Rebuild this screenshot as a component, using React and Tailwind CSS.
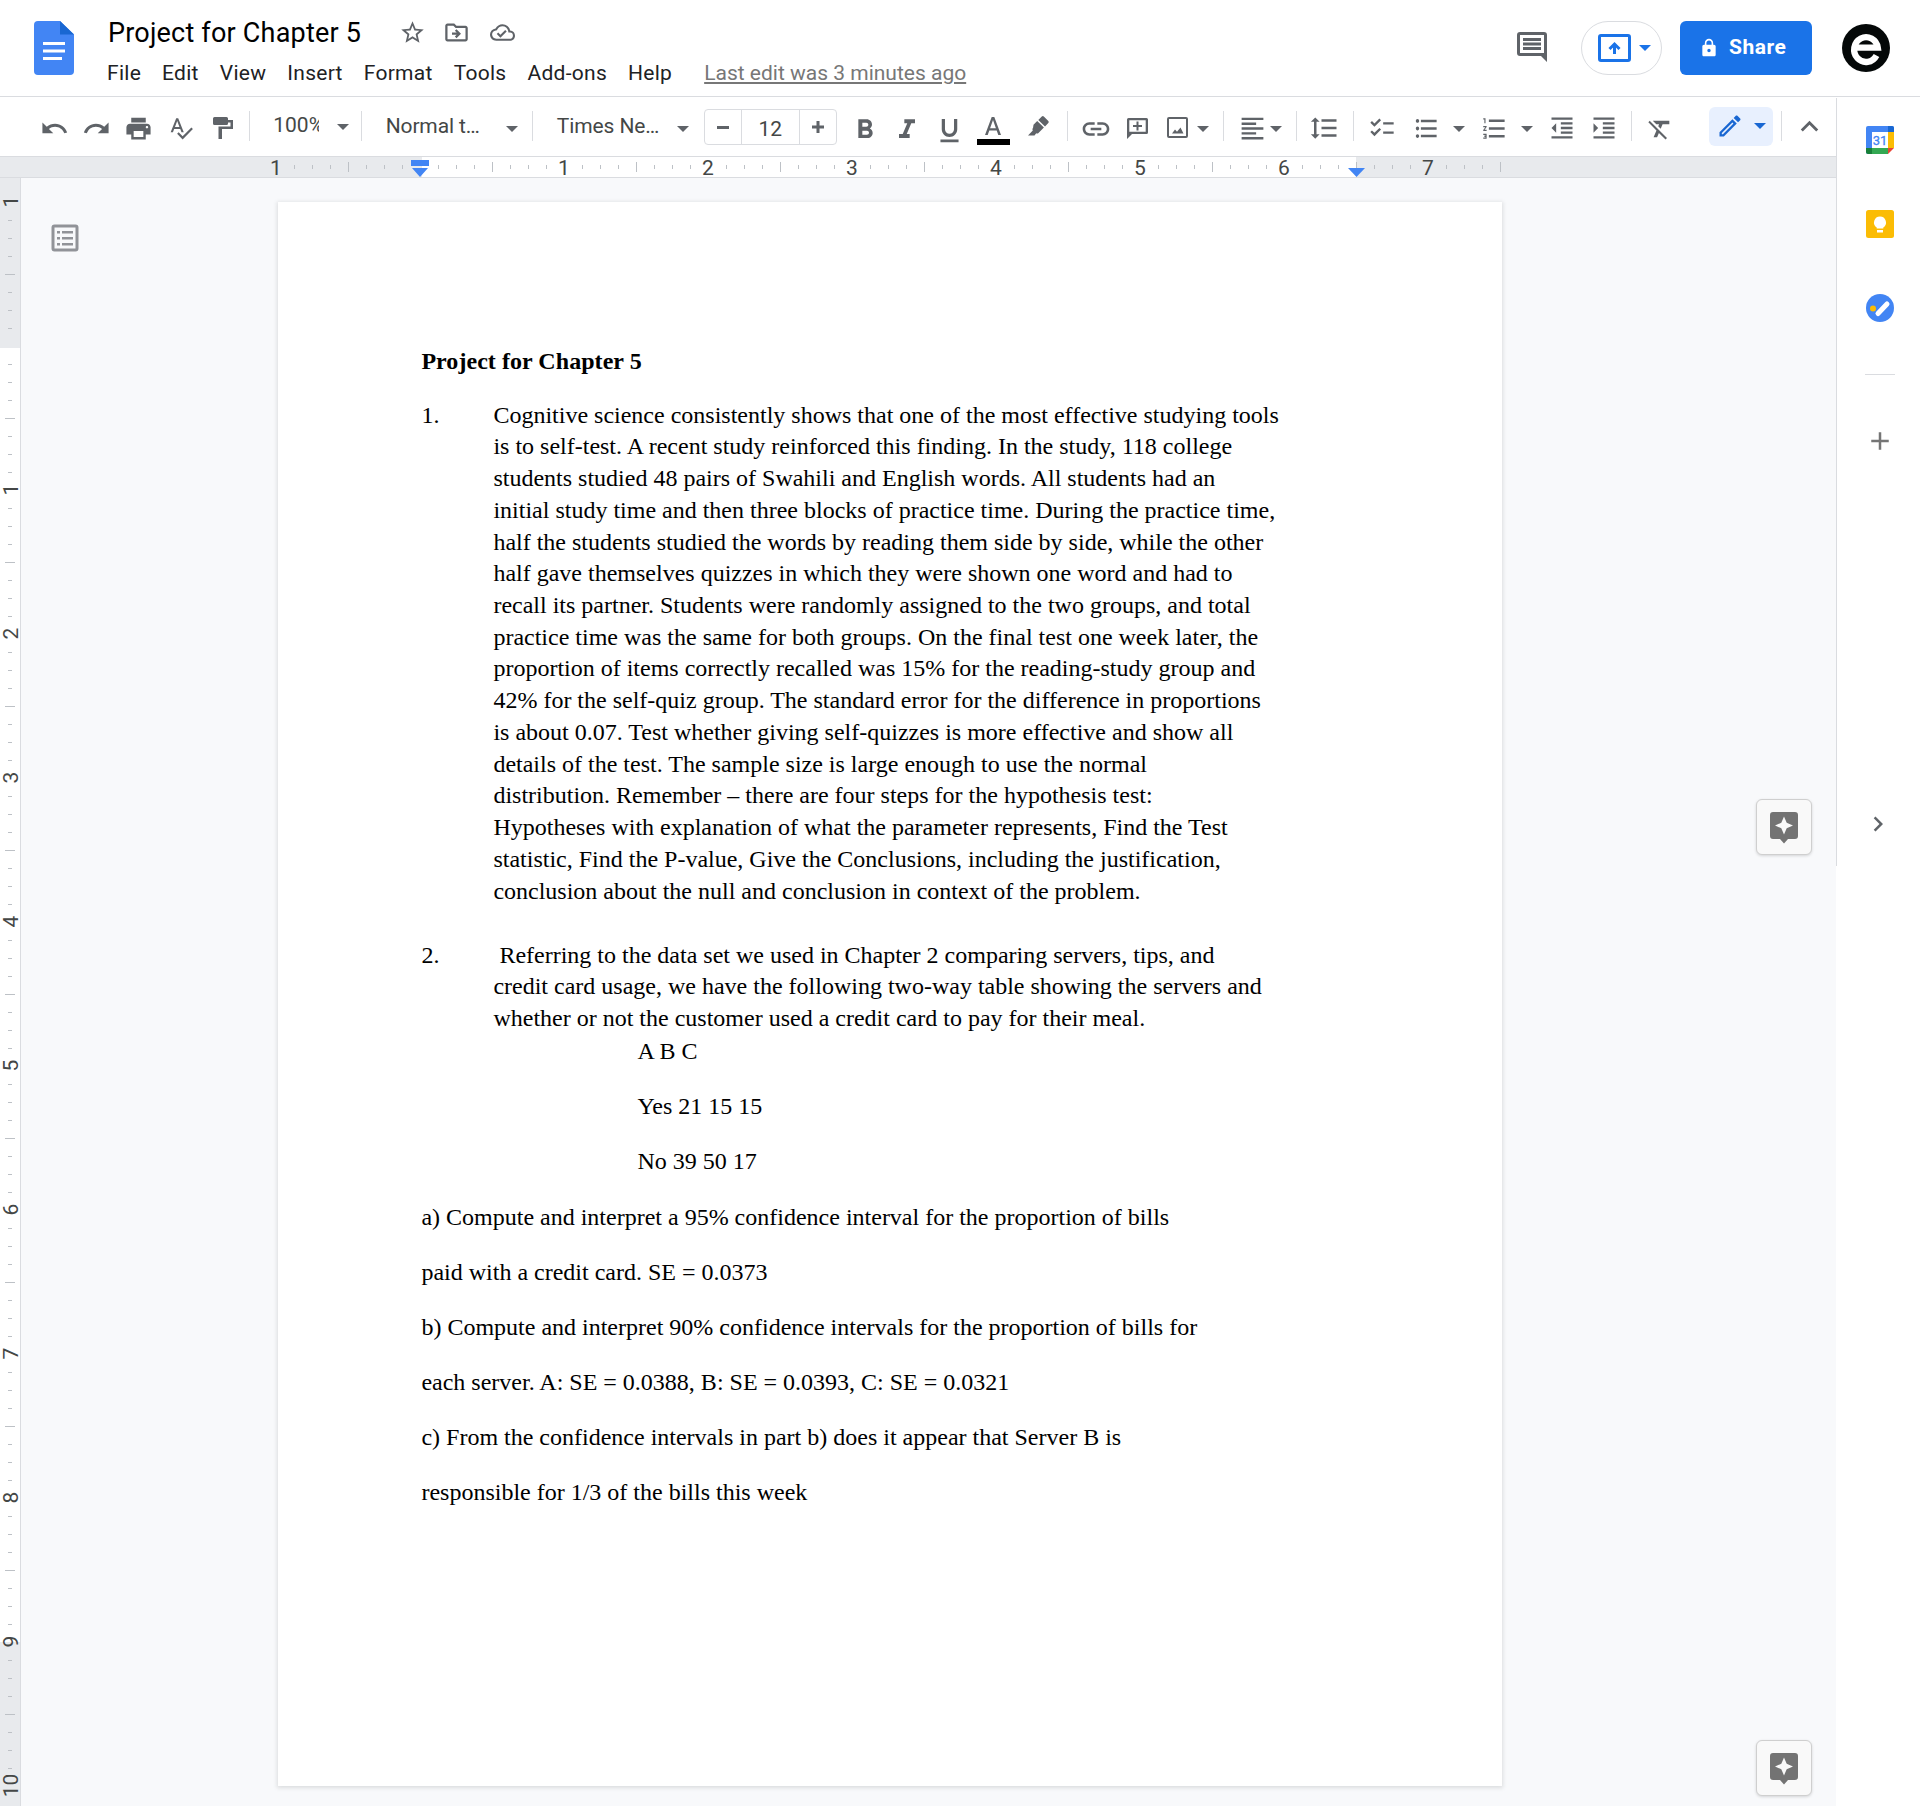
import {
  MdAdd,
  MdChecklist,
  MdChevronRight,
  MdExpandLess,
  MdFormatAlignLeft,
  MdFormatBold,
  MdFormatClear,
  MdFormatIndentDecrease,
  MdFormatIndentIncrease,
  MdFormatItalic,
  MdFormatLineSpacing,
  MdFormatListBulleted,
  MdFormatListNumbered,
  MdFormatUnderlined,
  MdLink,
  MdLock,
  MdOutlineCloudDone,
  MdOutlineDriveFileMove,
  MdOutlineEdit,
  MdPrint,
  MdRedo,
  MdSpellcheck,
  MdStarBorder,
  MdUndo,
} from 'react-icons/md';

const menus = [
  'File',
  'Edit',
  'View',
  'Insert',
  'Format',
  'Tools',
  'Add-ons',
  'Help',
];

const question1 = [
  'Cognitive science consistently shows that one of the most effective studying tools',
  'is to self-test. A recent study reinforced this finding. In the study, 118 college',
  'students studied 48 pairs of Swahili and English words. All students had an',
  'initial study time and then three blocks of practice time. During the practice time,',
  'half the students studied the words by reading them side by side, while the other',
  'half gave themselves quizzes in which they were shown one word and had to',
  'recall its partner. Students were randomly assigned to the two groups, and total',
  'practice time was the same for both groups. On the final test one week later, the',
  'proportion of items correctly recalled was 15% for the reading-study group and',
  '42% for the self-quiz group. The standard error for the difference in proportions',
  'is about 0.07. Test whether giving self-quizzes is more effective and show all',
  'details of the test. The sample size is large enough to use the normal',
  'distribution. Remember – there are four steps for the hypothesis test:',
  'Hypotheses with explanation of what the parameter represents, Find the Test',
  'statistic, Find the P-value, Give the Conclusions, including the justification,',
  'conclusion about the null and conclusion in context of the problem.',
];

const question2 = [
  ' Referring to the data set we used in Chapter 2 comparing servers, tips, and',
  'credit card usage, we have the following two-way table showing the servers and',
  'whether or not the customer used a credit card to pay for their meal.',
];

const table = ['A B C', 'Yes 21 15 15', 'No 39 50 17'];

const parts = [
  'a) Compute and interpret a 95% confidence interval for the proportion of bills',
  'paid with a credit card. SE = 0.0373',
  'b) Compute and interpret 90% confidence intervals for the proportion of bills for',
  'each server. A: SE = 0.0388, B: SE = 0.0393, C: SE = 0.0321',
  'c) From the confidence intervals in part b) does it appear that Server B is',
  'responsible for 1/3 of the bills this week',
];

function Arrow({ className = '' }) {
  return (
    <svg
      className={`w-3 h-1.5 shrink-0 fill-current ${className}`}
      viewBox="0 0 12 6"
    >
      <path d="M0 0h12L6 6z" />
    </svg>
  );
}

function Separator({ className = '' }) {
  return (
    <div className={`w-px h-[30px] mb-px shrink-0 bg-[#dadce0] ${className}`} />
  );
}

function Tool({ children, className = 'w-[42px]' }) {
  return (
    <div className={`flex items-center justify-center shrink-0 ${className}`}>
      {children}
    </div>
  );
}

function DocsLogo() {
  return (
    <svg className="w-10 h-[54px] shrink-0" viewBox="0 0 40 54">
      <path
        d="M4 0h22l14 13.5V50a4 4 0 0 1-4 4H4a4 4 0 0 1-4-4V4a4 4 0 0 1 4-4z"
        fill="#4285f4"
      />
      <path d="M26 0l14 13.5H26z" fill="#1967d2" />
      <path d="M9 21h22v3H9zM9 28.500h22v3H9zM9 36h19v3H9z" fill="#fff" />
    </svg>
  );
}

function Header() {
  return (
    <header className="flex h-[97px] shrink-0 border-b border-[#dadce0] pl-[34px] pr-[30px]">
      <div className="pt-[21px]">
        <DocsLogo />
      </div>
      <div className="ml-[33px] flex-1">
        <div className="flex items-center h-[34px] mt-[16px]">
          <h1 className="w-[254px] pl-px whitespace-nowrap text-[27px] leading-[34px] text-black tracking-[0.2px]">
            Project for Chapter 5
          </h1>
          <div className="flex items-center gap-[17px] ml-[38px] mb-[2px] text-[#5f6368]">
            <MdStarBorder size={27} />
            <MdOutlineDriveFileMove size={27} />
            <MdOutlineCloudDone size={25} className="ml-[3px]" />
          </div>
        </div>
        <nav className="flex items-center h-[36px] mt-[6px] gap-[21px] text-[21px] tracking-[0.28px] text-[#202124]">
          {menus.map((menu) => (
            <span key={menu}>{menu}</span>
          ))}
          <span className="ml-[11px] text-[#777777] tracking-normal underline decoration-2 underline-offset-2">
            Last edit was 3 minutes ago
          </span>
        </nav>
      </div>
      <div className="flex items-center h-[96px]">
        <svg
          className="w-[30px] h-[30px] mb-[2px]"
          viewBox="0 0 30 30"
          fill="#5f6368"
        >
          <path
            fillRule="evenodd"
            d="M3 0h24a3 3 0 0 1 3 3v27l-6-6H3a3 3 0 0 1-3-3V3a3 3 0 0 1 3-3zM3 3v18h24V3z"
          />
          <path d="M6 6h18v3H6zM6 10.500h18v3H6zM6 15h18v3H6z" />
        </svg>
        <div className="flex items-center ml-[34px] w-[81px] h-[54px] pl-4 rounded-full border border-[#dadce0] text-[#1a73e8]">
          <svg className="w-[33px] h-[28px]" viewBox="0 0 33 28">
            <rect
              x="1.5"
              y="1.5"
              width="30"
              height="25"
              rx="1.5"
              fill="none"
              stroke="currentColor"
              strokeWidth="3"
            />
            <path
              d="M16.500 20V10M11.500 15l5-5 5 5"
              fill="none"
              stroke="currentColor"
              strokeWidth="3"
            />
          </svg>
          <Arrow className="ml-2" />
        </div>
        <div className="flex items-center ml-[18px] w-[132px] h-[54px] rounded-md bg-[#1a73e8] text-white">
          <MdLock size={20} className="ml-[19px]" />
          <span className="ml-[10px] pb-px text-[21px] font-bold tracking-[0.5px]">
            Share
          </span>
        </div>
        <svg className="ml-[30px] w-12 h-12" viewBox="0 0 48 48">
          <circle cx="24" cy="24" r="24" fill="#040808" />
          <path
            d="M12 23.700H35.800A11.900 12.400 0 1 0 34.500 31.500"
            fill="none"
            stroke="#fff"
            strokeWidth="6.3"
          />
        </svg>
      </div>
    </header>
  );
}

function Toolbar() {
  return (
    <div className="flex items-center h-[60px] shrink-0 border-b border-[#dadce0] pl-[33px] text-[#5f6368]">
      <Tool className="w-[42.25px] pt-[3px]">
        <MdUndo size={29} />
      </Tool>
      <Tool className="w-[42.25px] pt-[3px]">
        <MdRedo size={29} />
      </Tool>
      <Tool className="w-[42.25px] pt-1">
        <MdPrint size={29} />
      </Tool>
      <Tool className="w-[42.25px] pt-[3px]">
        <MdSpellcheck size={26} />
      </Tool>
      <Tool className="w-[42.25px] pt-[3px]">
        <svg className="w-5 h-[22px]" viewBox="0 0 20 22" fill="currentColor">
          <path d="M1.500 0h12A1.500 1.500 0 0 1 15 1.500V3h5v9H9v10H5.500V9.500h12V5.500H15v1A1.500 1.500 0 0 1 13.500 8h-12A1.500 1.500 0 0 1 0 6.500v-5A1.500 1.500 0 0 1 1.500 0z" />
        </svg>
      </Tool>
      <Separator className="ml-[5px]" />
      <div className="ml-[23px] w-[45.5px] pb-[2px] overflow-hidden whitespace-nowrap text-[21px] text-[#444746]">
        100%
      </div>
      <Arrow className="ml-[18px] mt-px" />
      <Separator className="ml-3" />
      <div className="ml-6 w-[100px] pt-px whitespace-nowrap text-[21px] tracking-[-0.15px] text-[#444746]">
        Normal t…
      </div>
      <Arrow className="ml-5 mt-[4px]" />
      <Separator className="ml-[14px]" />
      <div className="ml-6 w-[108px] pt-px whitespace-nowrap text-[21px] tracking-[-0.1px] text-[#444746]">
        Times Ne…
      </div>
      <Arrow className="ml-[12px] mt-[4px]" />
      <div className="flex items-stretch ml-[15px] w-[133px] h-9 mt-px shrink-0 rounded border border-[#dadce0] text-[#444746]">
        <div className="flex items-center justify-center w-9">
          <div className="w-3 h-[3px] bg-[#5f6368]" />
        </div>
        <div className="flex items-center justify-center flex-1 border-x border-[#dadce0] pt-[4px] text-[21px] leading-[24px]">
          12
        </div>
        <div className="flex items-center justify-center w-9">
          <svg className="w-3 h-3" viewBox="0 0 12 12" fill="#5f6368">
            <path d="M4.500 0h3v4.500H12v3H7.500V12h-3V7.500H0v-3h4.500z" />
          </svg>
        </div>
      </div>
      <Tool className="ml-[7px] w-[42px] pt-[6px]">
        <MdFormatBold size={32} />
      </Tool>
      <Tool className="w-[42px] pt-[6px]">
        <MdFormatItalic size={32} />
      </Tool>
      <Tool className="ml-[0.75px] w-[42px] pt-[8px]">
        <MdFormatUnderlined size={31} />
      </Tool>
      <Tool className="w-[45px]">
        <div className="flex flex-col items-center pt-[9px]">
          <svg className="w-4 h-[18px]" viewBox="0 0 16 18" fill="currentColor">
            <path
              fillRule="evenodd"
              d="M6.700 0h2.600L16 18h-2.700l-1.600-4.500H4.300L2.700 18H0zM8 3l-2.900 8.200h5.800z"
            />
          </svg>
          <div className="mt-[4px] w-[33px] h-[6px] bg-black" />
        </div>
      </Tool>
      <Tool className="w-[45px] pb-[2px]">
        <svg className="w-[21px] h-5" viewBox="0 0 21 20" fill="currentColor">
          <path d="M13.800.500Q14.800-.300 15.800.500l4.500 4.500q.800 1 0 2L17 10.500 10.300 4zM9.200 5l6.700 6.500-5.700 5.700q-1 .8-2 0L6.500 19.500H0l4.800-5q-.8-1.500.2-2.500l.5-3.300z" />
        </svg>
      </Tool>
      <Separator className="ml-[6px]" />
      <Tool className="ml-[7px] w-[42px] pt-[4px]">
        <MdLink size={32} />
      </Tool>
      <Tool className="w-[42px] pt-[4px]">
        <svg
          className="w-[21px] h-[21px]"
          viewBox="0 0 21 21"
          fill="currentColor"
        >
          <path
            fillRule="evenodd"
            d="M1.500 0h18A1.500 1.500 0 0 1 21 1.500v13a1.500 1.500 0 0 1-1.500 1.500H5l-5 5V1.500A1.500 1.500 0 0 1 1.500 0zM2.300 2.300v11.400h16.400V2.300z"
          />
          <path d="M9.500 3.500h2V7H15v2h-3.500v3.500h-2V9H6V7h3.500z" />
        </svg>
      </Tool>
      <Tool className="w-[38px] pt-px">
        <svg
          className="w-[21px] h-[21px]"
          viewBox="0 0 21 21"
          fill="currentColor"
        >
          <path
            fillRule="evenodd"
            d="M2 0h17a2 2 0 0 1 2 2v17a2 2 0 0 1-2 2H2a2 2 0 0 1-2-2V2a2 2 0 0 1 2-2zM2 2v17h17V2z"
          />
          <path d="M5 16.500l3-4 2 2.300 3.500-4.300 3 6z" />
        </svg>
      </Tool>
      <Arrow className="mt-[4px]" />
      <Separator className="ml-[14px]" />
      <Tool className="ml-[12px] w-[34px] pt-[3px]">
        <MdFormatAlignLeft size={29} />
      </Tool>
      <Arrow className="mt-[4px]" />
      <Separator className="ml-[14px]" />
      <Tool className="ml-[6px] w-[42px] pt-[2px]">
        <MdFormatLineSpacing size={30} />
      </Tool>
      <Separator className="ml-[8.5px]" />
      <Tool className="ml-[7px] w-[42px] pt-[2px]">
        <MdChecklist size={28} />
      </Tool>
      <Tool className="w-[46px] pt-[4px]">
        <MdFormatListBulleted size={27} className="scale-y-[1.12]" />
      </Tool>
      <Arrow className="ml-[4px] mt-[4px]" />
      <Tool className="ml-[8px] w-[42px] pt-[4px]">
        <MdFormatListNumbered size={27} className="scale-y-[1.15]" />
      </Tool>
      <Arrow className="ml-[6px] mt-[4px]" />
      <Tool className="ml-[7.5px] w-[42px] pt-[3px]">
        <MdFormatIndentDecrease size={28} />
      </Tool>
      <Tool className="w-[42px] pt-[3px]">
        <MdFormatIndentIncrease size={28} />
      </Tool>
      <Separator className="ml-[6.5px]" />
      <Tool className="ml-[7px] w-[42px] pt-[5px]">
        <MdFormatClear size={28} />
      </Tool>
      <div className="flex items-center ml-[28px] w-16 h-[39px] shrink-0 rounded-md bg-[#e8f0fe] pl-[6.5px] pb-px text-[#1967d2]">
        <MdOutlineEdit size={28} />
        <Arrow className="ml-[10.5px]" />
      </div>
      <Separator className="ml-2" />
      <Tool className="ml-[6.5px] w-[42px]">
        <MdExpandLess size={35} />
      </Tool>
    </div>
  );
}

// 18px per eighth of an inch; a label is drawn on every whole inch
const rulerTicks = Array.from({ length: 69 }, (_, i) => i);
const sideTicks = Array.from({ length: 89 }, (_, i) => i);

function Ruler() {
  return (
    <div className="relative flex h-[21px] shrink-0 border-b border-[#dadce0] bg-[#e8eaed]">
      <div className="w-[422px] shrink-0" />
      <div className="w-[934px] bg-white" />
      <div className="absolute inset-y-0 left-[267.5px] flex items-center text-[#444746]">
        {rulerTicks.map((i) => (
          <div
            key={i}
            className="flex items-center justify-center w-[18px] h-full shrink-0"
          >
            {i % 8 === 0 && i !== 8 && (
              <span className="-translate-x-[0.5px] translate-y-px text-[21px] leading-[20px]">
                {Math.abs(i / 8 - 1)}
              </span>
            )}
            {i % 8 === 4 && <div className="w-px h-[10px] bg-[#bdc1c6]" />}
            {i % 4 !== 0 && <div className="w-px h-1 bg-[#bdc1c6]" />}
          </div>
        ))}
      </div>
      <svg
        className="absolute left-[411px] top-[3px] w-[18px] h-[17px]"
        viewBox="0 0 18 17"
        fill="#4285f4"
      >
        <path d="M0 0h18v6H0zM1 8h16l-8 9z" />
      </svg>
      <svg
        className="absolute left-[1348px] top-[11px] w-[17px] h-[9px]"
        viewBox="0 0 17 9"
        fill="#4285f4"
      >
        <path d="M0 0h17L8.500 9z" />
      </svg>
    </div>
  );
}

function SideRuler() {
  return (
    <div className="flex flex-col relative w-[21px] shrink-0 border-r border-[#dadce0] bg-[#e8eaed]">
      <div className="h-[170px] shrink-0" />
      <div className="h-[1294px] shrink-0 bg-white" />
      <div className="absolute inset-x-0 top-[15.5px] text-[#444746]">
        {sideTicks.map((i) => (
          <div
            key={i}
            className="flex items-center justify-center w-[20px] h-[18px]"
          >
            {i % 8 === 0 && i !== 8 && (
              <span className="-rotate-90 -translate-y-px pt-[3px] text-[21px] leading-[20px]">
                {Math.abs(i / 8 - 1)}
              </span>
            )}
            {i % 8 === 4 && <div className="w-[10px] h-px bg-[#bdc1c6]" />}
            {i % 4 !== 0 && <div className="w-1 h-px bg-[#bdc1c6]" />}
          </div>
        ))}
      </div>
    </div>
  );
}

function Page() {
  return (
    <article className="w-[1224px] h-[1584px] shrink-0 bg-white pt-[144px] pl-[143.4px] shadow-[0_1px_4px_1px_rgba(60,64,67,0.15)] font-['Liberation_Serif',serif] text-[24px] leading-[31.72px] text-black whitespace-pre">
      <h2 className="font-bold tracking-[0.05px]">Project for Chapter 5</h2>
      <div className="flex mt-[22px]">
        <span className="w-[72px]">1.</span>
        <div>
          {question1.map((line) => (
            <p key={line}>{line}</p>
          ))}
        </div>
      </div>
      <div className="flex mt-[32.5px]">
        <span className="w-[72px]">2.</span>
        <div>
          {question2.map((line) => (
            <p key={line}>{line}</p>
          ))}
        </div>
      </div>
      <div className="flex flex-col gap-[23.3px] mt-[0.9px] pl-[216px]">
        {table.map((row) => (
          <p key={row}>{row}</p>
        ))}
      </div>
      <div className="flex flex-col gap-[23.4px] mt-[24px]">
        {parts.map((line) => (
          <p key={line}>{line}</p>
        ))}
      </div>
    </article>
  );
}

function AddNote({ className }) {
  return (
    <div
      className={`absolute left-[1756px] flex items-center justify-center w-14 h-14 rounded-md border border-[#cfcfcf] bg-[#f9f9f9] shadow-[0_1px_3px_rgba(0,0,0,0.15)] ${className}`}
    >
      <svg className="w-7 h-8 mt-[2px]" viewBox="0 0 28 32">
        <path
          d="M3 0h22a3 3 0 0 1 3 3v21a3 3 0 0 1-3 3h-7l-4 4.500L10 27H3a3 3 0 0 1-3-3V3a3 3 0 0 1 3-3z"
          fill="#737373"
        />
        <path
          d="M14 4.500l2.700 6.300L23 13.500l-6.300 2.700L14 22.500l-2.700-6.300L5 13.500l6.300-2.700z"
          fill="#f9f9f9"
        />
      </svg>
    </div>
  );
}

function SidePanel() {
  return (
    <aside className="flex flex-col items-center w-[84px] shrink-0 bg-white">
      <div className="flex flex-col items-center w-full h-[768px] mt-px border-l border-[#dadce0] pt-[28px] pl-[2px]">
        <svg className="w-7 h-7" viewBox="0 0 28 28">
          <rect width="28" height="28" rx="2" fill="#4285f4" />
          <path d="M22 0h4a2 2 0 0 1 2 2v4h-6z" fill="#1967d2" />
          <path d="M22 6h6v16h-6z" fill="#fbbc04" />
          <path d="M6 22h16v6H6z" fill="#34a853" />
          <path d="M0 22h6v6H2a2 2 0 0 1-2-2z" fill="#188038" />
          <path d="M22 22h6v6h-6z" fill="#fff" />
          <path d="M22 22h6l-6 6z" fill="#ea4335" />
          <path d="M6 6h16v16H6z" fill="#fff" />
          <text
            x="14"
            y="18.7"
            textAnchor="middle"
            fontSize="13"
            fill="#4285f4"
            stroke="#4285f4"
            strokeWidth="0.3"
          >
            31
          </text>
        </svg>
        <svg className="w-7 h-7 mt-14" viewBox="0 0 28 28">
          <rect width="28" height="28" rx="2.5" fill="#fbbc04" />
          <path
            d="M14 6.500a6 6 0 0 1 3.300 11v1H10.700v-1A6 6 0 0 1 14 6.500zM11 20h6v2.500h-6z"
            fill="#fff"
          />
        </svg>
        <svg className="w-7 h-7 mt-14" viewBox="0 0 28 28">
          <circle cx="14" cy="14" r="14" fill="#4285f4" />
          <circle cx="7" cy="14.5" r="3" fill="#fbbc04" />
          <path
            d="M12 19.500L21 10"
            stroke="#fff"
            strokeWidth="5"
            strokeLinecap="round"
          />
        </svg>
        <div className="mt-[52px] w-[30px] h-px bg-[#dadce0]" />
        <MdAdd size={30} className="mt-[51px] text-[#757575]" />
        <MdChevronRight size={30} className="mt-[353px] mr-1 text-[#5f6368]" />
      </div>
    </aside>
  );
}

function OutlineButton() {
  return (
    <svg className="w-7 h-7 mt-[46px] ml-[30px]" viewBox="0 0 28 28">
      <rect
        x="2"
        y="2"
        width="24"
        height="24"
        rx="1.5"
        fill="none"
        stroke="#919398"
        strokeWidth="3"
      />
      <path
        d="M6 7h3v2.500H6zM11 7h11v2.500H11zM6 13h3v2.500H6zM11 13h11v2.500H11zM6 19h3v2.500H6zM11 19h11v2.500H11z"
        fill="#919398"
      />
    </svg>
  );
}

export default function App() {
  return (
    <div className="relative flex flex-col w-[1920px] h-[1806px] overflow-hidden bg-white font-['Roboto',sans-serif]">
      <Header />
      <div className="flex flex-1 min-h-0">
        <div className="flex flex-col w-[1836px] shrink-0">
          <Toolbar />
          <Ruler />
          <div className="flex flex-1 min-h-0 overflow-hidden bg-[#f8f9fb]">
            <SideRuler />
            <div className="w-[257px] shrink-0">
              <OutlineButton />
            </div>
            <div className="pt-[24px]">
              <Page />
            </div>
          </div>
        </div>
        <SidePanel />
      </div>
      <AddNote className="top-[799px]" />
      <AddNote className="top-[1740px]" />
    </div>
  );
}
